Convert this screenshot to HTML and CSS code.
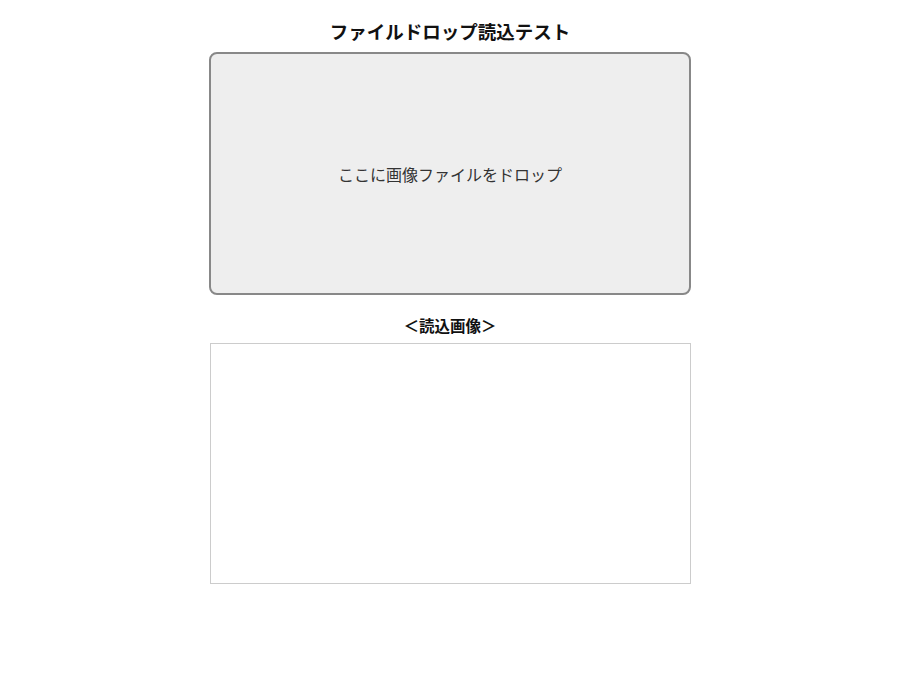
FILE: index.html
```html
<!DOCTYPE html>
<html lang="ja">
<head>
    <meta charset="UTF-8">
    <title>ファイルドロップ読込テスト</title>
    <link rel="stylesheet" href="styles.css">
</head>
<body>
    <div class="wrap">
        <h1 class="title">ファイルドロップ読込テスト</h1>
        <div class="drop-area" id="dropArea">ここに画像ファイルをドロップ</div>
        <h2 class="label">＜読込画像＞</h2>
        <canvas class="preview" id="preview" width="480" height="240"></canvas>
    </div>
</body>
</html>
```

FILE: styles.css
```css
* {
    margin: 0;
    padding: 0;
    box-sizing: border-box;
}

body {
    background: #fff;
    font-family: "Noto Sans CJK JP", "Noto Sans", sans-serif;
    color: #111;
}

.wrap {
    display: flex;
    flex-direction: column;
    align-items: center;
    padding-top: 18px;
}

.title {
    font-size: 18.5px;
    font-weight: bold;
    line-height: 26px;
    margin-bottom: 8px;
}

.drop-area {
    width: 482px;
    height: 243px;
    border: 2px solid #888;
    border-radius: 8px;
    background: #eee;
    display: flex;
    justify-content: center;
    align-items: center;
    font-size: 16px;
    color: #333;
}

.label {
    font-size: 15.5px;
    font-weight: bold;
    line-height: 22px;
    margin-top: 19px;
    margin-bottom: 7px;
}

.preview {
    display: block;
    width: 481px;
    height: 241px;
    border: 1px solid #ccc;
    background: #fff;
}
```
